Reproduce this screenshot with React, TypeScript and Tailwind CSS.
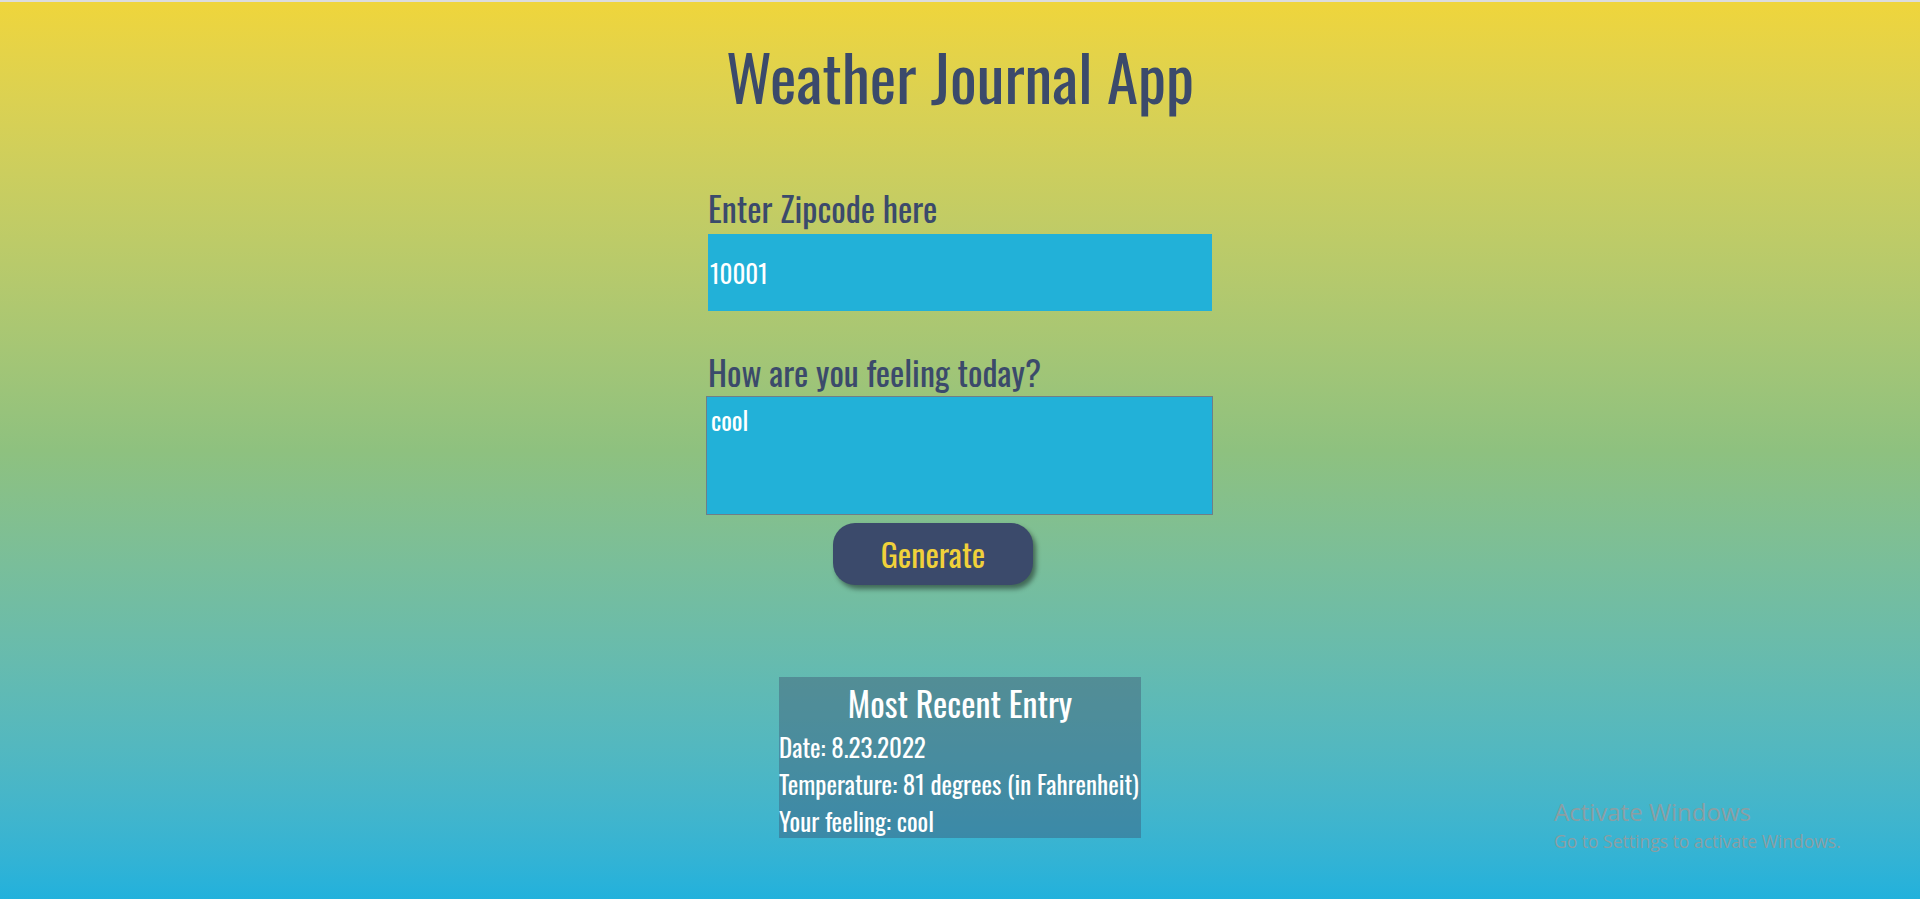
import React from 'react';

const font = { fontFamily: '"Oswald", "Liberation Sans Narrow", "DejaVu Sans Condensed", "Liberation Sans", sans-serif' };

const WeatherJournal = () => {
  const entry = {
    date: '8.23.2022',
    temp: '81 degrees (in Fahrenheit)',
    feeling: 'cool',
  };

  return (
    <div
      className="relative h-[899px] overflow-hidden border-t-2 border-[#dcdcdc] bg-gradient-to-b from-[#efd53b] via-[#8ec17f] to-[#21b1dc]"
      style={font}
    >
      <h1 className="mt-[42px] text-center text-[63px] leading-none font-normal text-[#3b4a6b]">
        Weather Journal App
      </h1>

      <div className="mx-auto mt-[84px] w-[508px]">
        {/* zipcode */}
        <label className="block pl-[2px] text-[34px] leading-none text-[#3b4a6b]">Enter Zipcode here</label>
        <input
          defaultValue="10001"
          className="mt-[9px] ml-[2px] block h-[77px] w-[504px] bg-[#22b1d8] px-[2px] text-[25px] text-white outline-none"
          style={font}
        />

        {/* feelings */}
        <label className="mt-[44px] block pl-[2px] text-[34px] leading-none text-[#3b4a6b]">
          How are you feeling today?
        </label>
        <textarea
          defaultValue="cool"
          className="mt-[7px] block h-[119px] w-[507px] resize-none border border-[#6f7f86] bg-[#22b1d8] pt-[10px] pl-[4px] text-[25px] leading-none text-white outline-none"
          style={font}
        />

        <button
          className="mt-[8px] ml-[127px] block h-[62px] w-[200px] rounded-[22px] bg-[#3b4a6b] text-[32px] leading-none text-[#f0d13a] shadow-[3px_4px_5px_rgba(0,0,0,0.45)]"
          style={font}
        >
          Generate
        </button>
      </div>

      {/* latest entry */}
      <div className="mx-auto mt-[92px] h-[161px] w-[362px] bg-[#3b4a6b]/40 pt-[9px] whitespace-nowrap text-white">
        <h2 className="text-center text-[34px] leading-none font-normal">Most Recent Entry</h2>
        <div className="mt-[8px] text-[25px] leading-[37px]">
          <div>Date: {entry.date}</div>
          <div>Temperature: {entry.temp}</div>
          <div>Your feeling: {entry.feeling}</div>
        </div>
      </div>

      {/* windows watermark */}
      <div
        className="absolute top-[794px] left-[1554px] text-[#8b9ea3]"
        style={{ fontFamily: '"Open Sans", "Noto Sans", sans-serif' }}
      >
        <div className="text-[24px] leading-[32px]">Activate Windows</div>
        <div className="mt-[2px] text-[17.5px] leading-[22px]">Go to Settings to activate Windows.</div>
      </div>
    </div>
  );
};

export default WeatherJournal;
